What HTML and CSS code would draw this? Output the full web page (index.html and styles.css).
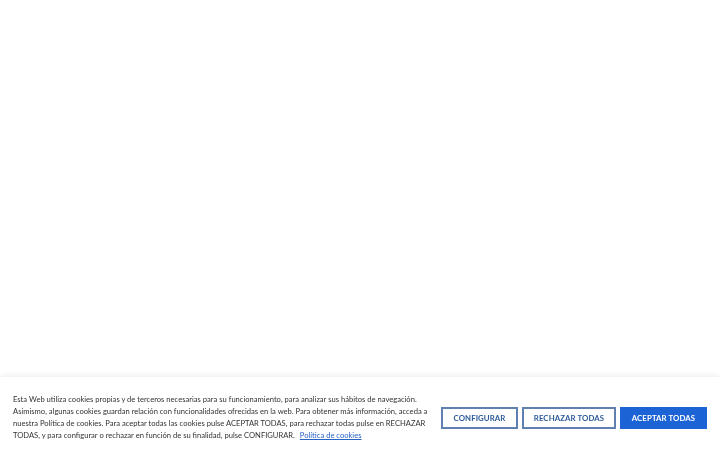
FILE: index.html
```html
<!DOCTYPE html>
<html lang="es">
<head>
<meta charset="utf-8">
<link rel="stylesheet" href="styles.css">
</head>
<body>
<div class="cookie-banner">
  <p class="cookie-text">Esta Web utiliza cookies propias y de terceros necesarias para su funcionamiento, para analizar sus hábitos de navegación. Asimismo, algunas cookies guardan relación con funcionalidades ofrecidas en la web. Para obtener más información, acceda a nuestra Política de cookies. Para aceptar todas las cookies pulse ACEPTAR TODAS, para rechazar todas pulse en RECHAZAR TODAS, y para configurar o rechazar en función de su finalidad, pulse CONFIGURAR. <a href="#" class="cookie-link">Política de cookies</a></p>
  <div class="cookie-actions">
    <button class="btn btn-outline btn-config">CONFIGURAR</button>
    <button class="btn btn-outline btn-reject">RECHAZAR TODAS</button>
    <button class="btn btn-primary btn-accept">ACEPTAR TODAS</button>
  </div>
</div>
</body>
</html>
```
FILE: styles.css
```css
html, body {
  margin: 0;
  padding: 0;
  background: #ffffff;
  width: 720px;
  height: 450px;
  overflow: hidden;
  font-family: "Lato", "Noto Sans", sans-serif;
}
.cookie-banner {
  position: fixed;
  left: 0;
  right: 0;
  bottom: 0;
  height: 73px;
  box-sizing: border-box;
  background: #ffffff;
  box-shadow: 0 -1px 6px rgba(0,0,0,0.08);
  display: flex;
  align-items: center;
  justify-content: space-between;
  padding: 7px 13px 0 13px;
}
.cookie-text {
  margin: 0;
  width: 418px;
  font-size: 7.6px;
  line-height: 12px;
  color: #333333;
}
.cookie-link {
  color: #2a63c4;
  text-decoration: underline;
  margin-left: 3px;
}
.cookie-actions {
  display: flex;
  gap: 4px;
  margin-top: 2px;
}
.btn {
  height: 22px;
  box-sizing: border-box;
  font-family: "Lato", "Noto Sans", sans-serif;
  font-weight: 700;
  font-size: 7.8px;
  letter-spacing: 0.1px;
  padding: 0;
  cursor: pointer;
}
.btn-outline {
  background: #ffffff;
  border: 2px solid #5f80b0;
  color: #2d5a9a;
}
.btn-config { width: 77px; }
.btn-reject { width: 94px; }
.btn-primary {
  background: #1c63d6;
  border: 2px solid #1c63d6;
  color: #ffffff;
  width: 87px;
}
```
